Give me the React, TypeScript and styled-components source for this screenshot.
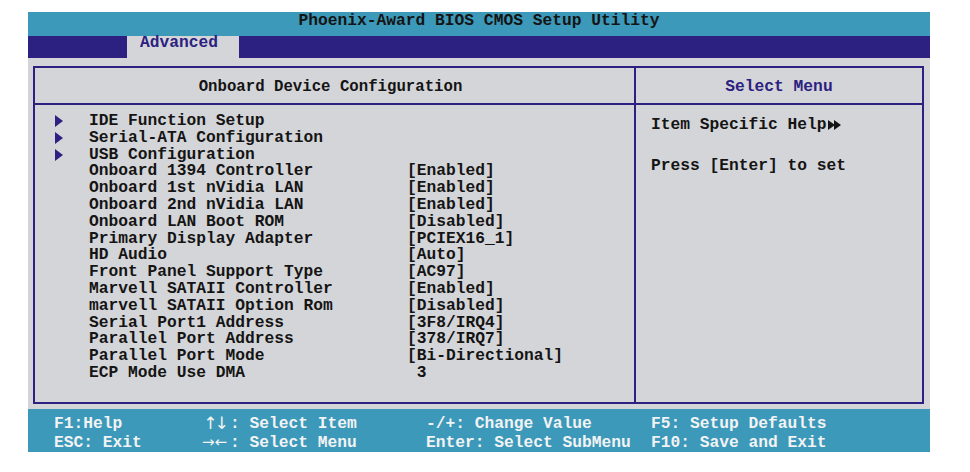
import React from 'react'
import styled, { createGlobalStyle } from 'styled-components'

const teal = '#3c99b9'
const navy = '#2c2180'
const gray = '#d4d5d8'

const GlobalStyle = createGlobalStyle`
    body{
        margin: 0;
        background: #ffffff;
    }
`

const Screen = styled.div`
    margin: 12px 0 0 28px;
    width: 902px;
    font-family: "Liberation Mono", "Courier New", monospace;
    font-weight: bold;
    font-size: 16.25px;
    color: #141414;
`

const TitleBar = styled.div`
    box-sizing: border-box;
    height: 24px;
    padding-top: 1px;
    line-height: 16px;
    text-align: center;
    background: ${teal};
    white-space: pre;
`

const NavBar = styled.div`
    height: 22px;
    padding-left: 99px;
    background: ${navy};
    display: flex;
`

const Tab = styled.div`
    box-sizing: border-box;
    width: 112px;
    height: 22px;
    padding-right: 8px;
    line-height: 14px;
    text-align: center;
    background: ${gray};
    color: ${navy};
`

const Body = styled.div`
    box-sizing: border-box;
    height: 351px;
    padding: 8px 6px 5px 5px;
    background: ${gray};
`

const Panel = styled.div`
    box-sizing: border-box;
    height: 338px;
    border: 2px solid ${navy};
    display: grid;
    grid-template-columns: 601px 1fr;
    grid-template-rows: 37px 1fr;
    > div{
        border-color: ${navy};
        border-style: solid;
        border-width: 0;
    }
    .head{
        border-bottom-width: 2px;
        display: flex;
        align-items: center;
        justify-content: center;
        white-space: pre;
    }
    .left{
        border-right-width: 2px;
    }
    .config-head{
        font-size: 15.7px;
        padding: 2px 8px 0 0;
    }
    .help-head{
        color: ${navy};
        padding-top: 2px;
    }
`

const List = styled.div`
    padding: 8px 0 0 20px;
`

const Row = styled.div`
    display: grid;
    grid-template-columns: 34px 318px auto;
    height: 16.8px;
    line-height: 16.8px;
    white-space: pre;
    > .arrow{
        display: flex;
        align-items: center;
    }
`

const HelpBox = styled.div`
    padding: 12px 0 0 15px;
    white-space: pre;
    line-height: 16px;
    > p{
        margin: 0 0 25px;
        display: flex;
        align-items: center;
    }
`

const Footer = styled.div`
    box-sizing: border-box;
    height: 43px;
    padding: 5px 0 0 26px;
    background: ${teal};
    color: #f2f3f4;
    display: grid;
    grid-template-columns: 145px 227px 225px auto;
    grid-auto-rows: 19px;
    line-height: 19px;
    white-space: pre;
`

const Keys = styled.span<{ $tall?: boolean }>`
    display: inline-block;
    width: 31px;
    text-align: center;
    font-family: "DejaVu Sans", sans-serif;
    font-weight: normal;
    font-size: ${p => (p.$tall ? '17px' : '15px')};
    letter-spacing: ${p => (p.$tall ? '-3px' : '0')};
    vertical-align: top;
`

function SubArrow() {
    return (
        <svg width="8" height="12" viewBox="0 0 8 12">
            <polygon points="0,0 8,6 0,12" fill={navy} />
        </svg>
    )
}

function DoubleArrow() {
    return (
        <svg width="13" height="10" viewBox="0 0 13 10" style={{ marginLeft: 1 }}>
            <polygon points="0,0 7,5 0,10" fill="#141414" />
            <polygon points="6,0 13,5 6,10" fill="#141414" />
        </svg>
    )
}

const items: [string, string, boolean][] = [
    ['IDE Function Setup', '', true],
    ['Serial-ATA Configuration', '', true],
    ['USB Configuration', '', true],
    ['Onboard 1394 Controller', '[Enabled]', false],
    ['Onboard 1st nVidia LAN', '[Enabled]', false],
    ['Onboard 2nd nVidia LAN', '[Enabled]', false],
    ['Onboard LAN Boot ROM', '[Disabled]', false],
    ['Primary Display Adapter', '[PCIEX16_1]', false],
    ['HD Audio', '[Auto]', false],
    ['Front Panel Support Type', '[AC97]', false],
    ['Marvell SATAII Controller', '[Enabled]', false],
    ['marvell SATAII Option Rom', '[Disabled]', false],
    ['Serial Port1 Address', '[3F8/IRQ4]', false],
    ['Parallel Port Address', '[378/IRQ7]', false],
    ['Parallel Port Mode', '[Bi-Directional]', false],
    ['ECP Mode Use DMA', ' 3', false],
]

function App() {
    return (
        <>
            <GlobalStyle />
            <Screen>
                <TitleBar>Phoenix-Award BIOS CMOS Setup Utility</TitleBar>
                <NavBar>
                    <Tab>Advanced</Tab>
                </NavBar>
                <Body>
                    <Panel>
                        <div className='head left config-head'>Onboard Device Configuration</div>
                        <div className='head help-head'>Select Menu</div>
                        <div className='left'>
                            <List>
                                {items.map(([label, value, sub]) => (
                                    <Row key={label}>
                                        <span className='arrow'>{sub && <SubArrow />}</span>
                                        <span>{label}</span>
                                        <span>{value}</span>
                                    </Row>
                                ))}
                            </List>
                        </div>
                        <div>
                            <HelpBox>
                                <p>Item Specific Help<DoubleArrow /></p>
                                <p>Press [Enter] to set</p>
                            </HelpBox>
                        </div>
                    </Panel>
                </Body>
                <Footer>
                    <span>F1:Help</span>
                    <span><Keys $tall>↑↓</Keys>: Select Item</span>
                    <span>-/+: Change Value</span>
                    <span>F5: Setup Defaults</span>
                    <span>ESC: Exit</span>
                    <span><Keys>→←</Keys>: Select Menu</span>
                    <span>Enter: Select SubMenu</span>
                    <span>F10: Save and Exit</span>
                </Footer>
            </Screen>
        </>
    )
}

export default App
